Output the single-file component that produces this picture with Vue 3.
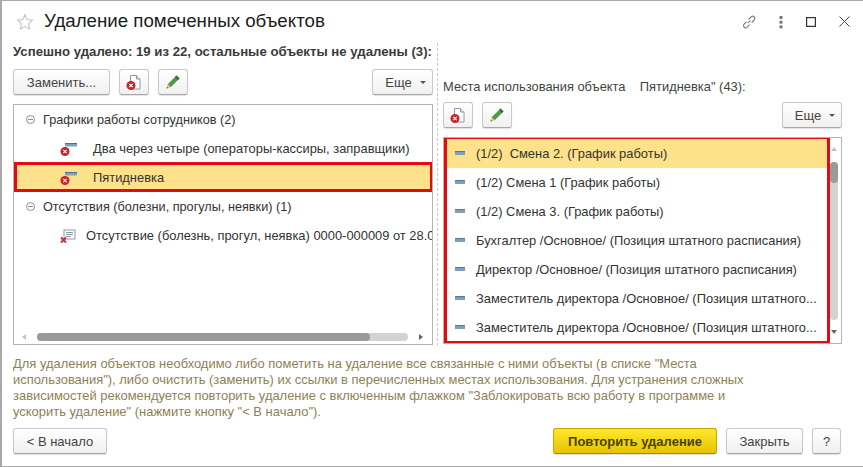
<script setup>
const rowsRight = [
  '(1/2)  Смена 2. (График работы)',
  '(1/2) Смена 1 (График работы)',
  '(1/2) Смена 3. (График работы)',
  'Бухгалтер /Основное/ (Позиция штатного расписания)',
  'Директор /Основное/ (Позиция штатного расписания)',
  'Заместитель директора /Основное/ (Позиция штатного...',
  'Заместитель директора /Основное/ (Позиция штатного...'
]
</script>

<template>
  <div class="window">
    <header class="head">
      <svg class="star" width="18" height="18" viewBox="0 0 18 18"><path d="M9 1.800l2.200 4.800 5.200.6-3.900 3.500 1.100 5.200L9 13.300l-4.600 2.600 1.100-5.200L1.600 7.200l5.200-.6z" fill="none" stroke="#c4c4c4" stroke-width="1.100"/></svg>
      <h1 class="title">Удаление помеченных объектов</h1>
      <div class="win-tools">
        <svg width="16" height="16" viewBox="0 0 16 16" fill="none" stroke="#777" stroke-width="1.100"><path d="M6.800 9.200l2.600-2.600M5.600 7.600L2.900 10.300a2.200 2.200 0 0 0 3 3.100l2.600-2.700M7.600 5.400l2.600-2.600a2.200 2.200 0 0 1 3.100 3.100l-2.600 2.600"/></svg>
        <svg width="4" height="14" viewBox="0 0 4 14" fill="#777"><rect x="0.500" y="1" width="3" height="3"/><rect x="0.500" y="5.700" width="3" height="3"/><rect x="0.500" y="10.400" width="3" height="3"/></svg>
        <svg width="10" height="10" viewBox="0 0 10 10" fill="none" stroke="#333" stroke-width="1.200"><rect x="0.600" y="0.600" width="8.800" height="8.800"/></svg>
        <svg width="11" height="11" viewBox="0 0 11 11" fill="none" stroke="#444" stroke-width="1"><path d="M.5.5l10 10M10.500.5l-10 10"/></svg>
      </div>
    </header>

    <div class="body">
      <section class="pane left">
        <div class="status">Успешно удалено: 19 из 22, остальные объекты не удалены (3):</div>
        <div class="bar">
          <button class="btn replace">Заменить...</button>
          <button class="btn icon">
            <svg width="16" height="17" viewBox="0 0 16 17"><path d="M4.500 1.500h6l3.500 3.500v10h-9.500z" fill="#fff" stroke="#8a97a8"/><path d="M10.500 1.500v3.500h3.500" fill="#dfe5ec" stroke="#8a97a8"/><circle cx="5" cy="11.500" r="4.500" fill="#c9242b"/><path d="M3.300 9.800l3.400 3.400M6.700 9.800l-3.400 3.400" stroke="#fff" stroke-width="1.200"/></svg>
          </button>
          <button class="btn icon">
            <svg width="16" height="16" viewBox="0 0 16 16"><path d="M11.500 1.500l3 3-8.800 8.800-3-3z" fill="#4f9a45"/><path d="M11.500 1.500l3 3-1.500 1.500-3-3z" fill="#2f6f2c"/><path d="M2.700 10.300l3 3-4.200 1.200z" fill="#e5bd7a"/><path d="M1.500 14.500l.5-1.800 1.300 1.300z" fill="#555"/></svg>
          </button>
          <button class="btn more">Еще<span class="caret"></span></button>
        </div>
        <div class="table tree">
          <div class="row group"><span class="toggle"></span>Графики работы сотрудников (2)</div>
          <div class="row item">
            <svg class="obj" width="20" height="16" viewBox="0 0 20 16"><rect x="6" y="2" width="12" height="3.500" fill="#7f9fbb"/><rect x="6" y="2" width="12" height="1" fill="#50708c"/><circle cx="6" cy="10.500" r="4.500" fill="#c9242b"/><path d="M4.300 8.800l3.400 3.400M7.700 8.800l-3.400 3.400" stroke="#fff" stroke-width="1.100"/></svg>
            Два через четыре (операторы-кассиры, заправщики)
          </div>
          <div class="row item selected">
            <svg class="obj" width="20" height="16" viewBox="0 0 20 16"><rect x="6" y="2" width="12" height="3.500" fill="#7f9fbb"/><rect x="6" y="2" width="12" height="1" fill="#50708c"/><circle cx="6" cy="10.500" r="4.500" fill="#c9242b"/><path d="M4.300 8.800l3.400 3.400M7.700 8.800l-3.400 3.400" stroke="#fff" stroke-width="1.100"/></svg>
            Пятидневка
          </div>
          <div class="row group"><span class="toggle"></span>Отсутствия (болезни, прогулы, неявки) (1)</div>
          <div class="row item doc">
            <svg class="obj doc-icon" width="16" height="16" viewBox="0 0 16 16"><rect x="4" y="2" width="11" height="9" fill="#fff" stroke="#8c9aa6"/><path d="M6 4.500h7M6 6.500h7M6 8.500h5" stroke="#8c9aa6"/><path d="M1 9.500l5 5M6 9.500l-5 5" stroke="#cf2a35" stroke-width="2"/></svg>
            Отсутствие (болезнь, прогул, неявка) 0000-000009 от 28.0
          </div>
          <div class="hscroll">
            <span class="arrow a-left"></span>
            <div class="htrack"><div class="hthumb"></div></div>
            <span class="arrow a-right"></span>
          </div>
          <div class="red-box red-row"></div>
        </div>
      </section>

      <div class="splitter"></div>

      <section class="pane right">
        <div class="places">Места использования объекта&nbsp;&nbsp;&nbsp;&nbsp;Пятидневка" (43):</div>
        <div class="bar">
          <button class="btn icon">
            <svg width="16" height="17" viewBox="0 0 16 17"><path d="M4.500 1.500h6l3.500 3.500v10h-9.500z" fill="#fff" stroke="#8a97a8"/><path d="M10.500 1.500v3.500h3.500" fill="#dfe5ec" stroke="#8a97a8"/><circle cx="5" cy="11.500" r="4.500" fill="#c9242b"/><path d="M3.300 9.800l3.400 3.400M6.700 9.800l-3.400 3.400" stroke="#fff" stroke-width="1.200"/></svg>
          </button>
          <button class="btn icon">
            <svg width="16" height="16" viewBox="0 0 16 16"><path d="M11.500 1.500l3 3-8.800 8.800-3-3z" fill="#4f9a45"/><path d="M11.500 1.500l3 3-1.500 1.500-3-3z" fill="#2f6f2c"/><path d="M2.700 10.300l3 3-4.200 1.200z" fill="#e5bd7a"/><path d="M1.500 14.500l.5-1.800 1.300 1.300z" fill="#555"/></svg>
          </button>
          <button class="btn more r">Еще<span class="caret"></span></button>
        </div>
        <div class="table list">
          <div v-for="(t, i) in rowsRight" :key="i" class="lrow" :class="{ selected: i === 0 }">
            <span class="dash"></span><span class="ltext">{{ t }}</span>
          </div>
          <div class="vscroll">
            <span class="arrow a-up"></span>
            <div class="vtrack"><div class="vthumb"></div></div>
            <span class="arrow a-down"></span>
          </div>
          <div class="red-box red-list"></div>
        </div>
      </section>
    </div>

    <p class="hint">Для удаления объектов необходимо либо пометить на удаление все связанные с ними объекты (в списке "Места использования"), либо очистить (заменить) их ссылки в перечисленных местах использования. Для устранения сложных зависимостей рекомендуется повторить удаление с включенным флажком "Заблокировать всю работу в программе и ускорить удаление" (нажмите кнопку "&lt; В начало").</p>

    <footer class="foot">
      <button class="btn back">&lt; В начало</button>
      <span class="spacer"></span>
      <button class="btn primary">Повторить удаление</button>
      <button class="btn close">Закрыть</button>
      <button class="btn help">?</button>
    </footer>
  </div>
</template>

<style>
html, body { margin: 0; background: #fff; }
</style>

<style scoped>
.window {
  width: 863px;
  height: 467px;
  box-sizing: border-box;
  border: 1px solid #a9a9a9;
  border-left-width: 2px;
  border-right: 0;
  background: #fff;
  font-family: "Liberation Sans", Arial, sans-serif;
  font-size: 12.900px;
  color: #333;
  overflow: hidden;
  display: flex;
  flex-direction: column;
}
.head {
  height: 41px;
  display: flex;
  align-items: center;
  padding: 0 13px 0 14px;
  flex: none;
}
.star { flex: none; margin-right: 10px; }
.title {
  margin: 0;
  font-size: 18.700px;
  font-weight: 400;
  color: #1c1c1c;
  line-height: 1;
}
.win-tools { margin-left: auto; display: flex; align-items: center; }
.win-tools svg:nth-child(1) { margin-right: 22px; }
.win-tools svg:nth-child(2) { margin-right: 23px; }
.win-tools svg:nth-child(3) { margin-right: 23px; }

.body { display: flex; padding-left: 11px; height: 304px; flex: none; }
.pane { display: flex; flex-direction: column; }
.left { width: 420px; }
.right { width: 399px; }
.splitter {
  width: 0;
  margin: 1px 5px 0 4px;
  border-left: 1px dashed #c8c8c8;
}
.status {
  font-size: 13.200px;
  font-weight: 700;
  color: #3b3b3b;
  line-height: 20px;
  margin-bottom: 7px;
  white-space: nowrap;
}
.places {
  margin-top: 35px;
  line-height: 20px;
  height: 20px;
  margin-bottom: 5px;
  color: #444;
}
.bar { display: flex; gap: 9px; height: 26px; flex: none; margin-bottom: 9px; }

.btn {
  box-sizing: border-box;
  height: 26px;
  padding: 0;
  border: 1px solid #c9c9c9;
  border-bottom-color: #a8a8a8;
  border-radius: 3px;
  background: linear-gradient(#ffffff, #f0f0f0);
  box-shadow: 0 1px 1px rgba(0, 0, 0, 0.12);
  font: inherit;
  font-size: 13px;
  color: #444;
  display: inline-flex;
  align-items: center;
  justify-content: center;
}
.replace { width: 97px; }
.icon { width: 30px; }
.more { width: 61px; margin-left: auto; padding-left: 6px; }
.more.r { width: 60px; }
.caret {
  width: 0;
  height: 0;
  margin-left: 8px;
  border: 3px solid transparent;
  border-top: 3px solid #555;
  border-bottom: 0;
}

.table {
  position: relative;
  box-sizing: border-box;
  border: 1px solid #b4b4b4;
  height: 241px;
  flex: none;
  overflow: hidden;
}
.list { height: 207px; padding-top: 1px; }
.row {
  height: 29px;
  display: flex;
  align-items: center;
  white-space: nowrap;
  color: #333;
}
.group { padding-left: 12px; font-size: 12.700px; }
.toggle {
  box-sizing: border-box;
  position: relative;
  width: 9px;
  height: 9px;
  margin-right: 8px;
  border: 1px solid #8d8d8d;
  border-radius: 50%;
}
.toggle::after {
  content: "";
  position: absolute;
  left: 1px;
  right: 1px;
  top: 3px;
  height: 1px;
  background: #8d8d8d;
}
.item { padding-left: 45px; }
.obj { flex: none; margin-right: 14px; }
.doc-icon { margin-right: 10px; }
.doc { padding-left: 46px; }
.selected { background: #fde18b; }

.hscroll {
  position: absolute;
  left: 0;
  right: 0;
  bottom: 3px;
  height: 8px;
}
.htrack {
  position: absolute;
  left: 23px;
  width: 371px;
  height: 8px;
  border-radius: 4px;
  background: #d3d3d3;
}
.hthumb { width: 333px; height: 8px; border-radius: 4px; background: #9a9a9a; }

.arrow { position: absolute; width: 0; height: 0; border: 3px solid transparent; }
.a-left { left: 8px; top: 1px; border-left: 0; border-right: 4px solid #c4c4c4; }
.a-right { right: 9px; top: 1px; border-right: 0; border-left: 4px solid #666; }
.a-up { left: 1px; top: 0; border-top: 0; border-bottom: 4px solid #c4c4c4; }
.a-down { left: 1px; bottom: 0; border-bottom: 0; border-top: 4px solid #666; }

.lrow {
  height: 29px;
  display: flex;
  align-items: center;
  width: 385px;
  box-sizing: border-box;
  padding-left: 11px;
}
.dash {
  flex: none;
  width: 10px;
  height: 4px;
  margin: 0 11px 2px 0;
  background: #7f9fbb;
  border-top: 1px solid #5a7b98;
  box-sizing: border-box;
}
.ltext {
  width: 346px;
  white-space: pre;
  color: #333;
}
.vscroll {
  position: absolute;
  top: 9px;
  bottom: 9px;
  right: 3px;
  width: 8px;
}
.vtrack {
  position: absolute;
  top: 15px;
  left: 0;
  width: 8px;
  height: 158px;
  border-radius: 4px;
  background: #d3d3d3;
}
.vthumb { width: 8px; height: 21px; border-radius: 4px; background: #9a9a9a; }

.red-box { position: absolute; box-sizing: border-box; border: 3px solid #e30b13; pointer-events: none; }
.red-row { left: 0; right: -1px; top: 57px; height: 30px; }
.red-list { left: 0; top: -2px; width: 386px; height: 208px; }

.hint {
  margin: 10px 0 0;
  width: 745px;
  padding: 0 0 0 11px;
  height: 64px;
  box-sizing: content-box;
  font-size: 12.950px;
  line-height: 16px;
  color: #8f8156;
  flex: none;
}
.foot {
  display: flex;
  align-items: center;
  margin-top: 8px;
  padding: 0 22px 0 11px;
  gap: 9px;
  flex: none;
}
.spacer { flex: 1; }
.back { width: 94px; }
.primary {
  width: 164px;
  background: linear-gradient(#fde82e, #e6c400);
  border-color: #c2a800;
  border-bottom-color: #a08a00;
  color: #4d3f00;
  font-weight: 700;
}
.close { width: 77px; }
.help { width: 29px; }
</style>
